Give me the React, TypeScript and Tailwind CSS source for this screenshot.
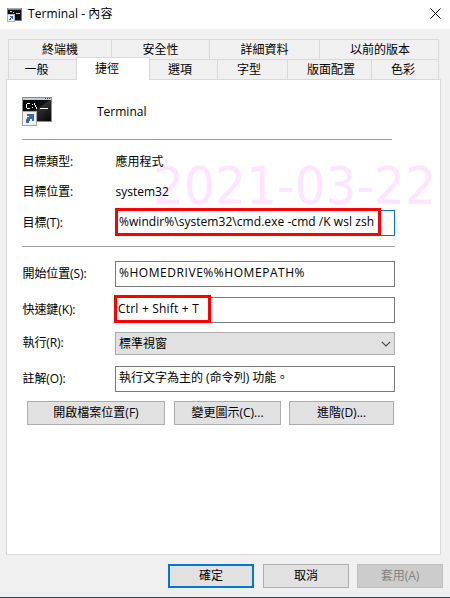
import type { ReactNode } from "react";

function TerminalIcon({ className }: { className: string }) {
  return (
    <svg className={className} viewBox="0 0 30 29" shapeRendering="crispEdges">
      <defs>
        <linearGradient id="screen" x1="0" y1="0" x2="1" y2="1">
          <stop offset="0" stopColor="#000" />
          <stop offset="0.45" stopColor="#111" />
          <stop offset="0.5" stopColor="#303030" />
          <stop offset="1" stopColor="#050505" />
        </linearGradient>
      </defs>
      <rect x="0" y="0" width="30" height="25" fill="#8b9095" />
      <rect x="1" y="1" width="28" height="2" fill="#c3ccd6" />
      <rect x="23" y="1" width="1" height="1" fill="#46566b" />
      <rect x="25" y="1" width="1" height="1" fill="#46566b" />
      <rect x="27" y="1" width="1" height="1" fill="#46566b" />
      <rect x="1" y="3" width="28" height="21" fill="url(#screen)" />
      <g fill="#fff">
        <rect x="5" y="6" width="3" height="1" />
        <rect x="4" y="7" width="1" height="4" />
        <rect x="5" y="11" width="3" height="1" />
        <rect x="10" y="7" width="1" height="1" />
        <rect x="10" y="10" width="1" height="1" />
        <rect x="12" y="6" width="1" height="2" />
        <rect x="13" y="8" width="1" height="2" />
        <rect x="14" y="10" width="1" height="2" />
        <rect x="18" y="11" width="8" height="1" />
      </g>
      <rect x="0.5" y="14.5" width="14" height="14" fill="#f1f1f1" stroke="#a6a6a6" />
      <path d="M5 17H12V24H10V22H8V24H7V26H4V22H5V20H7V19H5Z" fill="#3567b2" />
    </svg>
  );
}

function SmallTerminalIcon() {
  return (
    <svg className="mr-px h-[14px] w-[15px]" viewBox="0 0 15 14" shapeRendering="crispEdges">
      <rect width="15" height="13" fill="#777d84" />
      <rect x="1" width="13" height="1" fill="#a4adb8" />
      <rect x="1" y="2" width="13" height="10" fill="#111" />
      <path d="M3 3.5H5M6 4.5H7M9 5.5H13" stroke="#ccc" />
      <rect x="0.5" y="6.5" width="7" height="7" fill="#f1f1f1" stroke="#b5b5b5" />
      <path d="M3 8H6V11H5V10H4V12H2V11H3V10H4V9H3Z" fill="#3567b2" />
    </svg>
  );
}

function Tab({ className, children }: { className: string; children: ReactNode }) {
  return (
    <div className={`flex items-center justify-center border-r border-[#d9d9d9] whitespace-nowrap ${className}`}>
      {children}
    </div>
  );
}

function Row({ label, className, children }: { label: string; className: string; children: ReactNode }) {
  return (
    <div className={`flex items-center ${className}`}>
      <span className="w-[93px] shrink-0 pb-px pl-[0.5px] whitespace-nowrap tracking-[-0.1px]">{label}</span>
      {children}
    </div>
  );
}

function Field({ className = "border-[#7a7a7a] pl-[3px]", children }: { className?: string; children?: ReactNode }) {
  return (
    <div className={`relative flex h-[26px] w-[280px] items-center border bg-white pb-[3px] whitespace-nowrap ${className}`}>
      {children}
    </div>
  );
}

function Button({ className, children }: { className: string; children: ReactNode }) {
  return (
    <button className={`flex h-6 items-center justify-center whitespace-nowrap ${className}`}>{children}</button>
  );
}

export default function App() {
  return (
    <div className="flex h-[598px] w-[450px] flex-col overflow-hidden border-b border-[#1e4e5c] bg-[#f0f0f0] font-['Open_Sans','Noto_Sans_CJK_TC',sans-serif] text-[12px] leading-[16px] text-black">
      <header className="flex h-[29px] shrink-0 items-center bg-white pr-[9px] pl-[7px]">
        <SmallTerminalIcon />
        <span className="ml-[5px] grow pb-px tracking-[0.07px]">Terminal - 內容</span>
        <svg className="mb-[3px] h-[11px] w-[11px]" viewBox="0 0 11 11">
          <path d="M.5.5l10 10M10.5.5l-10 10" stroke="#000" fill="none" />
        </svg>
      </header>

      <nav className="mt-[10px] ml-2 w-[431px] shrink-0">
        <div className="flex h-[20px] border-t border-l border-[#d9d9d9]">
          <Tab className="w-[103px]">終端機</Tab>
          <Tab className="w-[98px]">安全性</Tab>
          <Tab className="w-[110px]">詳細資料</Tab>
          <Tab className="w-[119px] pl-[2px]">以前的版本</Tab>
        </div>
        <div className="flex h-[20px] border-t border-l border-[#d9d9d9]">
          <Tab className="w-[67px] border-r-0 pt-px pr-[12px]">一般</Tab>
          <div className="relative z-10 -mt-[3px] flex h-[23px] w-[74px] items-center justify-center border border-b-0 border-[#d9d9d9] bg-white pr-[12px]">捷徑</div>
          <Tab className="w-[68px] pt-px pr-[7px]">選項</Tab>
          <Tab className="w-[70px] pt-px pr-[7px]">字型</Tab>
          <Tab className="w-[84px] pt-px pl-[3px]">版面配置</Tab>
          <Tab className="w-[67px] pt-px pr-[4px]">色彩</Tab>
        </div>
      </nav>

      <main className="relative ml-[6px] h-[476px] w-[435px] shrink-0 border border-[#d9d9d9] bg-white pl-[15px]">
        <div className="absolute top-[71px] left-[146px] origin-left scale-x-[0.955] font-['DejaVu_Sans',sans-serif] text-[51px] leading-[72px] whitespace-nowrap text-[#ffe4ff]">2021-03-22</div>
        <div className="absolute -top-px left-[70px] h-px w-[72px] bg-white" />
        <div className="relative">
          <div className="flex h-[59px] items-start pt-[17px]">
            <TerminalIcon className="h-[29px] w-[30px]" />
            <span className="mt-[7px] ml-[45px]">Terminal</span>
          </div>
          <div className="h-px w-[370px] bg-[#a0a0a0]" />
          <Row label="目標類型:" className="mt-[14px] h-4"><span className="pl-[0.5px]">應用程式</span></Row>
          <Row label="目標位置:" className="mt-[14px] h-4"><span className="pl-[0.5px]">system32</span></Row>
          <Row label="目標(T):" className="mt-[10px] h-[26px]">
            <Field className="border-[#0078d7] pl-[3px] tracking-[0.05px]">
              %windir%\system32\cmd.exe -cmd /K wsl zsh
              <div className="absolute -top-[3px] -left-px h-[28px] w-[266px] border-3 border-[#ff0000]" />
            </Field>
          </Row>
          <div className="mt-[10px] h-px w-[373px] bg-[#a0a0a0]" />
          <Row label="開始位置(S):" className="mt-[14px] h-[26px]">
            <Field className="border-[#7a7a7a] pl-[3px] tracking-[0.55px]">%HOMEDRIVE%%HOMEPATH%</Field>
          </Row>
          <Row label="快速鍵(K):" className="mt-[10px] h-[26px]">
            <Field className="border-[#7a7a7a] pl-[2px] tracking-[0.2px]">
              Ctrl + Shift + T
              <div className="absolute -top-[3px] -left-[2px] h-[28px] w-[97px] border-3 border-[#ff0000]" />
            </Field>
          </Row>
          <Row label="執行(R):" className="mt-[9px] h-[23px]">
            <div className="flex h-[23px] w-[280px] items-center justify-between border border-[#adadad] bg-[#e1e1e1] pr-[3px] pl-[3px]">
              標準視窗
              <svg className="h-[6px] w-[10px]" viewBox="0 0 10 6">
                <path d="M.8.8L5 5L9.2.8" stroke="#444" strokeWidth="1.1" fill="none" />
              </svg>
            </div>
          </Row>
          <Row label="註解(O):" className="mt-[11px] h-[26px]">
            <Field>執行文字為主的 (命令列) 功能。</Field>
          </Row>
          <div className="mt-[9px] ml-[5px] flex">
            <Button className="w-[138px] border border-[#adadad] bg-[#e1e1e1]">開啟檔案位置(F)</Button>
            <Button className="ml-[9px] w-[107px] border border-[#adadad] bg-[#e1e1e1]">變更圖示(C)...</Button>
            <Button className="ml-[8px] w-[105px] border border-[#adadad] bg-[#e1e1e1]">進階(D)...</Button>
          </div>
        </div>
      </main>

      <footer className="mt-[9px] flex pl-[168px]">
        <Button className="w-[86px] border-2 border-[#0078d7] bg-[#e1e1e1]">確定</Button>
        <Button className="ml-[9px] w-[86px] border border-[#adadad] bg-[#e1e1e1]">取消</Button>
        <Button className="ml-[8px] w-[86px] border border-[#bfbfbf] bg-[#cccccc] text-[#838383]">套用(A)</Button>
      </footer>
    </div>
  );
}
